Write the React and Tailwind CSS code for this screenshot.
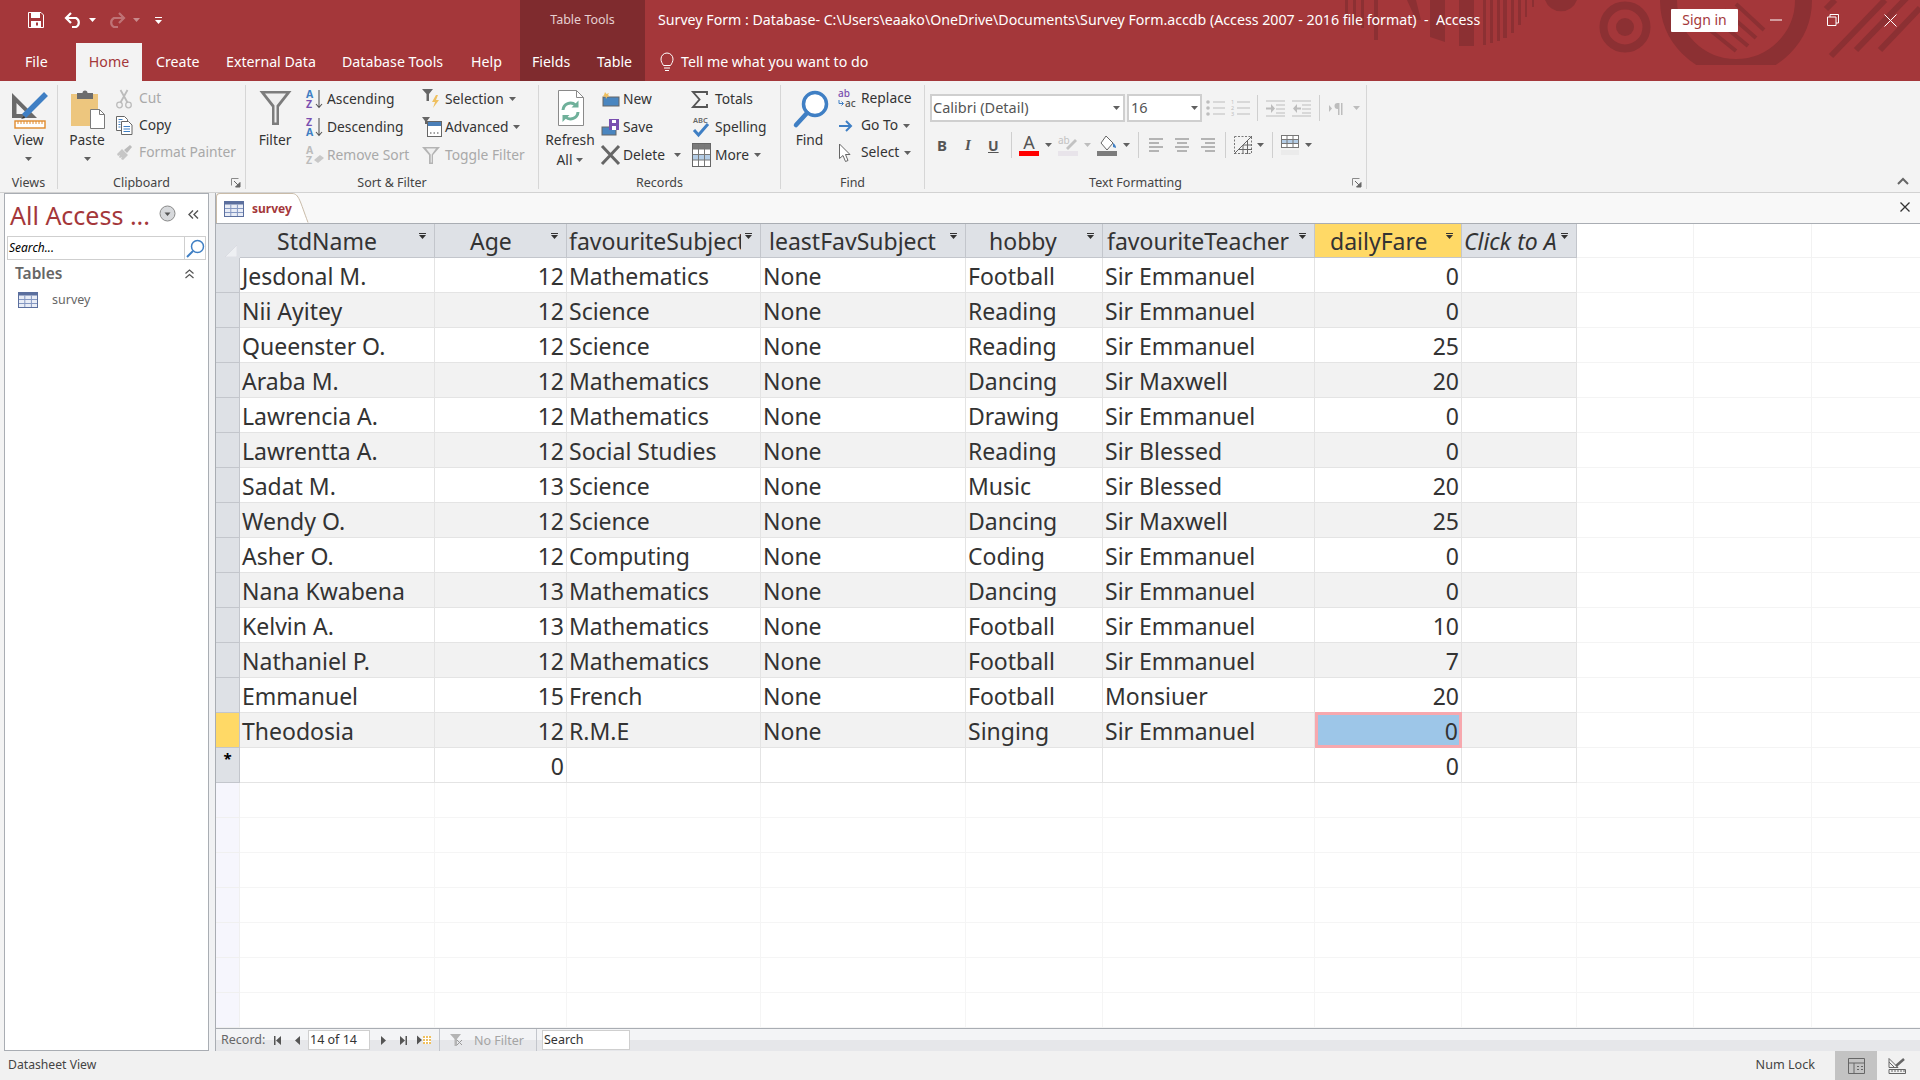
import React from 'react';

const SANS = "font-['Noto_Sans','Open_Sans',sans-serif]";

const columns = [
  { w: 'w-[195px]', name: 'StdName', head: 'pl-[37px]' },
  { w: 'w-[132px]', name: 'Age', head: 'pl-[35px]', right: true },
  { w: 'w-[194px]', name: 'favouriteSubject', head: 'pl-[2px]' },
  { w: 'w-[205px]', name: 'leastFavSubject', head: 'pl-[8px]' },
  { w: 'w-[137px]', name: 'hobby', head: 'pl-[23px]' },
  { w: 'w-[212px]', name: 'favouriteTeacher', head: 'pl-[4px]' },
  { w: 'w-[147px]', name: 'dailyFare', head: 'pl-[15px]', right: true },
  { w: 'w-[115px]', name: 'Click to Add', head: 'pl-[2px] italic' },
];

const rows = [
  ['Jesdonal M.', '12', 'Mathematics', 'None', 'Football', 'Sir Emmanuel', '0'],
  ['Nii Ayitey', '12', 'Science', 'None', 'Reading', 'Sir Emmanuel', '0'],
  ['Queenster O.', '12', 'Science', 'None', 'Reading', 'Sir Emmanuel', '25'],
  ['Araba M.', '12', 'Mathematics', 'None', 'Dancing', 'Sir Maxwell', '20'],
  ['Lawrencia A.', '12', 'Mathematics', 'None', 'Drawing', 'Sir Emmanuel', '0'],
  ['Lawrentta A.', '12', 'Social Studies', 'None', 'Reading', 'Sir Blessed', '0'],
  ['Sadat M.', '13', 'Science', 'None', 'Music', 'Sir Blessed', '20'],
  ['Wendy O.', '12', 'Science', 'None', 'Dancing', 'Sir Maxwell', '25'],
  ['Asher O.', '12', 'Computing', 'None', 'Coding', 'Sir Emmanuel', '0'],
  ['Nana Kwabena', '13', 'Mathematics', 'None', 'Dancing', 'Sir Emmanuel', '0'],
  ['Kelvin A.', '13', 'Mathematics', 'None', 'Football', 'Sir Emmanuel', '10'],
  ['Nathaniel P.', '12', 'Mathematics', 'None', 'Football', 'Sir Emmanuel', '7'],
  ['Emmanuel', '15', 'French', 'None', 'Football', 'Monsiuer', '20'],
  ['Theodosia', '12', 'R.M.E', 'None', 'Singing', 'Sir Emmanuel', '0'],
];

const Caret = ({ c = '#606060', className = '' }) => (
  <svg width="7" height="4" className={`shrink-0 ${className}`}><path d="M0 0h7L3.5 4z" fill={c} /></svg>
);

const Svg = ({ w, h, children, className = '' }) => (
  <svg width={w} height={h} viewBox={`0 0 ${w} ${h}`} fill="none" className={`shrink-0 overflow-visible ${className}`}>{children}</svg>
);

const TableGlyph = ({ w = 20, h = 16 }) => (
  <Svg w={w} h={h}>
    <rect x="0" y="0" width={w} height={h} fill="#5b6f9e" />
    <rect x="1" y="3.5" width={w - 2} height={h - 4.5} fill="#e9edf6" />
    <path d={`M1 7.5H${w - 1}M1 11.5H${w - 1}M${w * 0.34} 3.5V${h - 1}M${w * 0.67} 3.5V${h - 1}`} stroke="#8598c2" />
  </Svg>
);

const icons = {
  view: (
    <Svg w={38} h={40}>
      <path d="M2 3v25h25zM6.5 13v11h11z" fill="#6a6a6a" fillRule="evenodd" />
      <path d="M36 4L14 26" stroke="#3f7fc4" strokeWidth="5.5" />
      <path d="M14 26l-3 3 4-1z" fill="#2b2b2b" />
      <rect x="5" y="31" width="30" height="7" stroke="#e08a2c" strokeWidth="1.4" fill="#fff" />
      <path d="M8 31v3M11 31v3M14 31v3M17 31v3M20 31v3M23 31v3M26 31v3M29 31v3M32 31v3" stroke="#e08a2c" />
    </Svg>
  ),
  paste: (
    <Svg w={36} h={39}>
      <rect x="1" y="4" width="27" height="32" fill="#edc67e" />
      <path d="M7 3h5.500a2.500 2.500 0 0 1 5 0H23v6H7z" fill="#6d6d6d" />
      <path d="M20.500 19.500h9l5 5v14h-14z" fill="#fff" stroke="#7a7a7a" />
      <path d="M29.500 19.500v5h5" stroke="#7a7a7a" />
    </Svg>
  ),
  cut: (
    <Svg w={16} h={20}>
      <circle cx="3.500" cy="16" r="2.800" stroke="#bcbcbc" strokeWidth="1.300" />
      <circle cx="12.500" cy="16" r="2.800" stroke="#bcbcbc" strokeWidth="1.300" />
      <path d="M4.500 13.500L11.500 1M11.500 13.500L4.500 1" stroke="#bcbcbc" strokeWidth="1.800" />
    </Svg>
  ),
  copy: (
    <Svg w={17} h={19}>
      <path d="M.5.500h8l3 3v11H.5z" fill="#fff" stroke="#666" />
      <path d="M5.500 5.500h7l3.500 3.500v9.500H5.500z" fill="#fff" stroke="#666" />
      <path d="M2.500 3.500h4M2.500 6h2M2.500 8.500h2M2.500 11h2M7.500 10.500h6.500M7.500 13h6.500M7.500 15.500h6.500" stroke="#3f7fc4" />
    </Svg>
  ),
  painter: (
    <Svg w={17} h={17}>
      <path d="M1 10l5-5 6 6-5 5-2-1 1-2-2 1-1-1 1-2-2 1z" fill="#c6c6c6" />
      <path d="M8 6l6-5 2 2-5 6z" fill="#bcbcbc" />
    </Svg>
  ),
  filter: (
    <Svg w={33} h={36}>
      <path d="M.5 1h32L20 17v18h-7V17z" fill="#7c7c7c" />
      <path d="M6 3.500h21L17.500 15.500v17h-2v-17z" fill="#efefef" />
    </Svg>
  ),
  ascending: (
    <Svg w={18} h={20}>
      <text x="0" y="9" fontSize="10.500" fontWeight="700" fill="#3f7fc4" fontFamily="Noto Sans">A</text>
      <text x="0" y="19" fontSize="10.500" fontWeight="700" fill="#7a4fb0" fontFamily="Noto Sans">Z</text>
      <path d="M13 1v17M10 15l3 3.500 3-3.500" stroke="#555" strokeWidth="1.100" />
    </Svg>
  ),
  descending: (
    <Svg w={18} h={20}>
      <text x="0" y="9" fontSize="10.500" fontWeight="700" fill="#7a4fb0" fontFamily="Noto Sans">Z</text>
      <text x="0" y="19" fontSize="10.500" fontWeight="700" fill="#3f7fc4" fontFamily="Noto Sans">A</text>
      <path d="M13 1v17M10 15l3 3.500 3-3.500" stroke="#555" strokeWidth="1.100" />
    </Svg>
  ),
  removeSort: (
    <Svg w={18} h={20}>
      <text x="0" y="9" fontSize="10.500" fontWeight="700" fill="#bcbcbc" fontFamily="Noto Sans">A</text>
      <text x="0" y="19" fontSize="10.500" fontWeight="700" fill="#bcbcbc" fontFamily="Noto Sans">Z</text>
      <path d="M8 15l6-5 4 3-6 5z" fill="#c8c8c8" />
    </Svg>
  ),
  selection: (
    <Svg w={18} h={20}>
      <path d="M0 0h11L7 5v7H4.500V5z" fill="#666" />
      <path d="M14 6l-4 7h3l-2 6 6-8h-3l2-5z" fill="#efc060" />
    </Svg>
  ),
  advanced: (
    <Svg w={20} h={20}>
      <path d="M0 0h8L5 4v3H3V4z" fill="#666" />
      <rect x="5.500" y="4.500" width="14" height="15" fill="#fff" stroke="#666" />
      <rect x="6" y="5" width="13" height="4" fill="#4a7fb8" />
      <path d="M8 16h1.500M11.500 16H13M15 16h1.500" stroke="#444" />
    </Svg>
  ),
  toggle: (
    <Svg w={18} h={19}>
      <path d="M0 1h18l-7 8v9H7V9z" fill="#b4b4b4" />
      <path d="M4 2.500h10L9.700 8.500v8h-1v-8z" fill="#efefef" />
    </Svg>
  ),
  refresh: (
    <Svg w={30} h={38}>
      <path d="M3.500 1.500h18l7 7v28h-25z" fill="#fff" stroke="#8a8a8a" />
      <path d="M21.500 1.500v7h7" stroke="#8a8a8a" />
      <path d="M8 21a7.500 7.500 0 0 1 12.500-5" stroke="#6fb09a" strokeWidth="3" />
      <path d="M23.500 11.500v7h-7z" fill="#6fb09a" />
      <path d="M23 23a7.500 7.500 0 0 1-12.500 5" stroke="#6fb09a" strokeWidth="3" />
      <path d="M7.500 33v-7h7z" fill="#6fb09a" />
    </Svg>
  ),
  newRec: (
    <Svg w={19} h={16}>
      <rect x="2" y="6" width="16" height="9" fill="#4a86c0" stroke="#666" />
      <path d="M4 1l1.500 2L8 2 7 4l2 1.500H6.500L5 8 4.500 5.500H1.500L3 4z" fill="#efc060" />
    </Svg>
  ),
  save: (
    <Svg w={19} h={19}>
      <rect x="1" y="9" width="14" height="8" fill="#4a86c0" stroke="#666" />
      <rect x="8" y="1" width="10" height="11" fill="#7a4fb0" />
      <rect x="11" y="2" width="4" height="3" fill="#fff" />
      <rect x="11" y="8" width="4" height="4" fill="#fff" />
    </Svg>
  ),
  deleteRec: (
    <Svg w={19} h={20}>
      <path d="M1 1l17 18M18 1L1 19" stroke="#666" strokeWidth="3" />
    </Svg>
  ),
  totals: (
    <Svg w={16} h={17}>
      <path d="M15 4V1H1l6.500 7.500L1 16h14v-3" stroke="#555" strokeWidth="1.900" />
    </Svg>
  ),
  spelling: (
    <Svg w={18} h={22}>
      <text x="1" y="6.500" fontSize="7.500" fontWeight="600" fill="#666" fontFamily="Noto Sans">ABC</text>
      <path d="M2 14l4.500 5L16 8" stroke="#3f7fc4" strokeWidth="3" />
    </Svg>
  ),
  more: (
    <Svg w={19} h={24}>
      <rect x=".5" y=".5" width="18" height="23" fill="#fff" stroke="#666" />
      <rect x="1" y="1" width="17" height="5" fill="#7a7a7a" />
      <rect x="1" y="11" width="17" height="6" fill="#b4cde6" />
      <path d="M1 6h17M1 11.500h17M1 17h17M6.500 1v22M12.500 1v22" stroke="#777" />
    </Svg>
  ),
  find: (
    <Svg w={36} h={38}>
      <circle cx="22" cy="14" r="11.500" stroke="#3f7fc4" strokeWidth="3.500" fill="#fff" />
      <path d="M14 23L3 35" stroke="#3f7fc4" strokeWidth="4.500" strokeLinecap="round" />
    </Svg>
  ),
  replace: (
    <Svg w={20} h={20}>
      <text x="0" y="8" fontSize="10" fontWeight="500" fill="#7a4fb0" fontFamily="Noto Sans">ab</text>
      <text x="7" y="18" fontSize="10" fontWeight="500" fill="#555" fontFamily="Noto Sans">ac</text>
      <path d="M1 11v3.500h4M3.500 12.500l2 2-2 2" stroke="#3f7fc4" />
    </Svg>
  ),
  goTo: (
    <Svg w={16} h={14}>
      <path d="M1 7h12M8 2l5 5-5 5" stroke="#3f7fc4" strokeWidth="2" />
    </Svg>
  ),
  select: (
    <Svg w={13} h={20}>
      <path d="M1.500 1v14.500l3.500-3 2.500 6 2.500-1-2.500-6h4.500z" fill="#fff" stroke="#666" />
    </Svg>
  ),
};

const Item = ({ icon, label, disabled, caret, slot = 'w-[22px]', height = 'h-[28px]', caretClass = 'ml-[5px]' }) => (
  <div className={`flex items-center ${height} ${disabled ? 'text-[#a9a9a9]' : 'text-[#333]'}`}>
    <span className={`flex items-center ${slot}`}>{icon}</span>
    <span className="whitespace-nowrap">{label}</span>
    {caret && <Caret className={caretClass} />}
  </div>
);

const Big = ({ icon, label, w, iconClass = '', caret = true }) => (
  <div className={`flex flex-col items-center ${w}`}>
    <div className={`h-[45px] flex justify-center items-start pt-[5px] ${iconClass}`}>{icon}</div>
    <div className="h-[20px] leading-[20px] text-[#333]">{label}</div>
    {caret && <div className="h-[18px] flex items-center"><Caret /></div>}
  </div>
);

const Launcher = () => (
  <svg width="11" height="11" className="absolute right-[4px] top-[2px]" fill="none">
    <path d="M8.500 1.500h-7v7" stroke="#8a8a8a" />
    <path d="M4 4l5 5M10 5.500V10H5.500z" stroke="#666" fill="#666" />
  </svg>
);

const Group = ({ w, label, launcher, children, className = '' }) => (
  <div className={`flex flex-col h-full border-r border-[#d6d6d6] ${w}`}>
    <div className={`h-[90px] flex ${className}`}>{children}</div>
    <div className={`relative h-[14px] pt-[1px] leading-[14px] text-center text-[12.5px] text-[#444] ${launcher ? 'pr-[20px]' : ''}`}>
      {label}
      {launcher && <Launcher />}
    </div>
  </div>
);

const Sep = ({ h = 'h-[26px]', className = '' }) => <div className={`w-px bg-[#cfcfcf] ${h} ${className}`} />;

const lines = (arr, c) => <path d={arr} stroke={c} strokeWidth="1.200" />;

const TextFormatting = () => (
  <div className="flex flex-col pl-[5px]">
    <div className="flex items-center h-[28px] mt-[9px]">
      <div className="flex items-center justify-between w-[195px] h-[28px] bg-white border-2 border-[#cfcfcf] pl-[1px] pr-[3px] text-[14.500px] text-[#555]">
        Calibri (Detail)<Caret />
      </div>
      <div className="flex items-center justify-between w-[75px] h-[28px] ml-[2px] bg-white border-2 border-[#cfcfcf] pl-[2px] pr-[2px] text-[14.500px] text-[#555]">
        16<Caret />
      </div>
      <Svg w={19} h={18} className="ml-[4px]">
        <circle cx="2" cy="3" r="1.800" fill="#bdbdbd" /><circle cx="2" cy="9" r="1.800" fill="#bdbdbd" /><circle cx="2" cy="15" r="1.800" fill="#bdbdbd" />
        {lines('M7 3h12M7 9h12M7 15h12', '#bdbdbd')}
      </Svg>
      <Svg w={19} h={18} className="ml-[6px]">
        <text x="0" y="5" fontSize="5.500" fill="#bdbdbd" fontFamily="Noto Sans">1</text>
        <text x="0" y="11" fontSize="5.500" fill="#bdbdbd" fontFamily="Noto Sans">2</text>
        <text x="0" y="17" fontSize="5.500" fill="#bdbdbd" fontFamily="Noto Sans">3</text>
        {lines('M6 3h13M6 9h13M6 15h13', '#bdbdbd')}
      </Svg>
      <Sep className="ml-[7px]" />
      <Svg w={19} h={17} className="ml-[8px]">
        {lines('M0 1h19M10 5h9M10 9h9M10 13h9M0 16h19', '#bdbdbd')}
        <path d="M0 7.500h5V4l4 4.500-4 4.500V9.500H0z" fill="#bdbdbd" />
      </Svg>
      <Svg w={19} h={17} className="ml-[7px]">
        {lines('M0 1h19M10 5h9M10 9h9M10 13h9M0 16h19', '#bdbdbd')}
        <path d="M9 7.500H5V4L1 8.500 5 13V9.500h4z" fill="#bdbdbd" />
      </Svg>
      <Sep className="ml-[8px]" />
      <Svg w={14} h={13} className="ml-[9px]">
        <path d="M0 3l3 3.500L0 10z" fill="#bdbdbd" />
        <path d="M8.500 1a3 3 0 0 0 0 6h.500v6h1.500V1H12v12h1.500V1" fill="#bdbdbd" />
      </Svg>
      <Caret c="#bdbdbd" className="ml-[10px]" />
    </div>
    <div className="flex items-center h-[28px] mt-[9px]">
      <span className="w-[33px] pl-[7px] text-[15px] font-bold text-[#555]">B</span>
      <span className="w-[25px] pl-[2px] text-[15px] font-bold italic text-[#555] font-['Liberation_Serif',serif]">I</span>
      <span className="w-[22px] text-[14px] font-bold text-[#555] underline">U</span>
      <Sep className="ml-[1px]" />
      <Svg w={20} h={21} className="ml-[7px]">
        <text x="10" y="14" textAnchor="middle" fontSize="18" fill="#555" fontFamily="Noto Sans">A</text>
        <rect y="16" width="20" height="5" fill="#f00" />
      </Svg>
      <Caret className="ml-[6px]" />
      <Svg w={20} h={21} className="ml-[6px]">
        <text x="0" y="9" fontSize="10" fill="#c2c2c2" fontFamily="Noto Sans">ab</text>
        <path d="M8 13l9-9 2 2-9 9z" fill="#c2c2c2" />
        <rect y="16" width="20" height="5" fill="#e8e4ea" />
      </Svg>
      <Caret c="#bdbdbd" className="ml-[6px]" />
      <Svg w={20} h={21} className="ml-[6px]">
        <path d="M9 1l7 7-6 7-6-7z" fill="#fff" stroke="#666" />
        <path d="M16 8c2 1 3 3 3 5-1 0-2-1-3-1z" fill="#3f7fc4" />
        <rect y="16" width="20" height="5" fill="#7c7c7c" />
      </Svg>
      <Caret className="ml-[6px]" />
      <Sep className="ml-[8px]" />
      <Svg w={14} h={16} className="ml-[10px]">{lines('M0 2h14M0 6h10M0 10h14M0 14h10', '#777')}</Svg>
      <Svg w={14} h={16} className="ml-[12px]">{lines('M0 2h14M2 6h10M0 10h14M2 14h10', '#777')}</Svg>
      <Svg w={14} h={16} className="ml-[12px]">{lines('M0 2h14M4 6h10M0 10h14M4 14h10', '#777')}</Svg>
      <Sep className="ml-[10px]" />
      <Svg w={18} h={18} className="ml-[8px]">
        <path d="M.5.500h17v17H.5z" stroke="#777" strokeDasharray="2 1.500" />
        <path d="M0 18L18 0M9 9v9M13.500 5v13M9 9h9M5 13.500h13" stroke="#666" />
      </Svg>
      <Caret className="ml-[5px]" />
      <Sep className="ml-[8px]" />
      <Svg w={18} h={20} className="ml-[8px]">
        <rect x=".5" y=".5" width="17" height="12" fill="#fff" stroke="#777" />
        <rect x="1" y="5" width="16" height="3" fill="#b4cde6" />
        <path d="M6 1v12M12 1v12M1 4.500h16M1 8.500h16" stroke="#777" />
        <rect y="15" width="18" height="5" fill="#ebebeb" />
      </Svg>
      <Caret className="ml-[6px]" />
    </div>
  </div>
);

const Ribbon = () => (
  <div className="flex h-[112px] pt-[4px] bg-[#f3f3f3] border-b border-[#d2d2d2] text-[13.800px]">
    <div className="flex h-[104px]">
      <Group w="w-[58px]" label="Views">
        <Big icon={icons.view} label="View" w="w-[57px]" />
      </Group>
      <Group w="w-[188px]" label="Clipboard" launcher>
        <Big icon={icons.paste} label="Paste" w="w-[58px]" iconClass="pl-[2px]" />
        <div className="flex flex-col">
          <Item icon={icons.cut} label="Cut" disabled height="h-[27px]" slot="w-[23px]" />
          <Item icon={icons.copy} label="Copy" height="h-[27px]" slot="w-[23px]" />
          <Item icon={icons.painter} label="Format Painter" disabled height="h-[27px]" slot="w-[23px]" />
        </div>
      </Group>
      <Group w="w-[293px]" label="Sort & Filter" className="pl-[6px]">
        <Big icon={icons.filter} label="Filter" w="w-[46px]" caret={false} />
        <div className="flex flex-col w-[116px] ml-[8px]">
          <Item icon={icons.ascending} label="Ascending" slot="w-[21px]" />
          <Item icon={icons.descending} label="Descending" slot="w-[21px]" />
          <Item icon={icons.removeSort} label="Remove Sort" slot="w-[21px]" disabled />
        </div>
        <div className="flex flex-col">
          <Item icon={icons.selection} label="Selection" caret slot="w-[23px]" />
          <Item icon={icons.advanced} label="Advanced" caret slot="w-[23px]" />
          <Item icon={icons.toggle} label="Toggle Filter" disabled slot="w-[23px]" />
        </div>
      </Group>
      <Group w="w-[242px]" label="Records">
        <div className="flex flex-col items-center w-[62px]">
          <div className="h-[45px] pt-[4px]">{icons.refresh}</div>
          <div className="h-[20px] leading-[20px] text-[#333]">Refresh</div>
          <div className="h-[20px] leading-[20px] text-[#333] flex items-center">All<Caret className="ml-[4px]" /></div>
        </div>
        <div className="flex flex-col w-[91px]">
          <Item icon={icons.newRec} label="New" />
          <Item icon={icons.save} label="Save" />
          <Item icon={icons.deleteRec} label="Delete" caret caretClass="ml-[9px]" />
        </div>
        <div className="flex flex-col">
          <Item icon={icons.totals} label="Totals" slot="w-[23px]" />
          <Item icon={icons.spelling} label="Spelling" slot="w-[23px]" />
          <Item icon={icons.more} label="More" caret slot="w-[23px]" />
        </div>
      </Group>
      <Group w="w-[144px]" label="Find">
        <Big icon={icons.find} label="Find" w="w-[57px]" iconClass="pl-[2px]" caret={false} />
        <div className="flex flex-col">
          <Item icon={icons.replace} label="Replace" height="h-[27px]" slot="w-[23px]" />
          <Item icon={icons.goTo} label="Go To" caret height="h-[27px]" slot="w-[23px]" />
          <Item icon={icons.select} label="Select" caret height="h-[27px]" slot="w-[23px]" />
        </div>
      </Group>
      <Group w="w-[442px]" label="Text Formatting" launcher>
        <TextFormatting />
      </Group>
    </div>
    <div className="flex-1 flex justify-end items-end pb-[7px] pr-[11px]">
      <svg width="12" height="8" fill="none"><path d="M1 7l5-5 5 5" stroke="#666" strokeWidth="2" /></svg>
    </div>
  </div>
);

const Watermark = () => (
  <svg width="580" height="81" viewBox="1340 0 580 81" className="absolute right-0 top-0" fill="none">
    <defs>
      <clipPath id="bigring"><path d="M1660 0h152v65h-152z" /></clipPath>
    </defs>
    <g fill="#8c3033">
      <path d="M1345 0h3v18h-3zM1353 0h3v25h-3zM1361 0h3v28h-3zM1374 0h4v40h-4zM1407 0h9l5 20h-5zM1430 0h15v42l-15-5zM1459 0h15v46h-15z" />
      <path d="M1483 0h3v45h-3zM1490 0h3v43h-3zM1497 0h3v41h-3zM1503 0h4v38h-4zM1511 0h3v33h-3zM1518 0h3v25h-3zM1525 0h2v17h-2zM1532 0h2v7h-2z" />
      <path d="M1545 0h32a17 17 0 0 1-32 0z" />
      <circle cx="1625" cy="27" r="9" />
    </g>
    <circle cx="1625" cy="27" r="21.500" stroke="#8c3033" strokeWidth="8" />
    <g clipPath="url(#bigring)">
      <circle cx="1736" cy="0" r="67.500" stroke="#8c3033" strokeWidth="17" />
      <path d="M1700 22l36 29M1712 16l36 30M1724 10l32 28M1736 4l28 26" stroke="#8c3033" strokeWidth="4" />
    </g>
    <path d="M1826 9l9-9M1831 56L1885 0M1856 50L1920 -16M1880 50L1920 8" stroke="#8c3033" strokeWidth="6" />
  </svg>
);

const Header = () => (
  <div className="relative flex h-[81px] bg-[#a4373a] text-white text-[14.200px]">
    <Watermark />
    <div className="relative flex flex-col w-[520px]">
      <div className="flex items-center h-[40px] pl-[28px]">
        <Svg w={16} h={16}>
          <path d="M.5.500h12.500l2.500 2.500v12.500H.5z" stroke="#fff" />
          <rect x="3" y="1" width="9" height="5" fill="#fff" />
          <rect x="3" y="9" width="10" height="6" fill="#fff" />
          <rect x="8" y="10.500" width="2" height="3" fill="#a4373a" />
        </Svg>
        <Svg w={18} h={16} className="ml-[20px]">
          <path d="M2 6h10a5 5 0 0 1 0 9H8" stroke="#fff" strokeWidth="2.200" />
          <path d="M7 1L2 6l5 5" stroke="#fff" strokeWidth="2.200" />
        </Svg>
        <Caret c="#fff" className="ml-[7px]" />
        <Svg w={18} h={16} className="ml-[12px] opacity-30">
          <path d="M16 6H6a5 5 0 0 0 0 9h4" stroke="#fff" strokeWidth="2.200" />
          <path d="M11 1l5 5-5 5" stroke="#fff" strokeWidth="2.200" />
        </Svg>
        <Caret c="#c98a8c" className="ml-[7px]" />
        <svg width="7" height="7" className="ml-[15px]"><path d="M0 0h7v1H0zM0 3h7L3.500 7z" fill="#fff" /></svg>
      </div>
      <div className="flex items-end h-[41px]">
        <div className="flex items-center w-[76px] h-[38px] pl-[25px]">File</div>
        <div className="flex items-center justify-center w-[66px] h-[38px] bg-[#f3f3f3] text-[#a4373a]">Home</div>
        <div className="flex items-center h-[38px] pl-[14px] w-[84px]">Create</div>
        <div className="flex items-center h-[38px] w-[116px]">External Data</div>
        <div className="flex items-center h-[38px] w-[129px]">Database Tools</div>
        <div className="flex items-center h-[38px]">Help</div>
      </div>
    </div>
    <div className="relative flex flex-col w-[125px] bg-[#7f2b2e]">
      <div className="flex items-center justify-center h-[40px] text-[12.500px] text-[#e6cfd0]">Table Tools</div>
      <div className="flex items-end h-[41px]">
        <div className="flex items-center h-[38px] pl-[12px] w-[77px]">Fields</div>
        <div className="flex items-center h-[38px]">Table</div>
      </div>
    </div>
    <div className="relative flex flex-col flex-1">
      <div className="flex items-center h-[40px] pl-[13px]">
        <span className="whitespace-pre">{'Survey Form : Database- C:\\Users\\eaako\\OneDrive\\Documents\\Survey Form.accdb (Access 2007 - 2016 file format)  -  Access'}</span>
        <div className="ml-auto flex items-center justify-center w-[67px] h-[23px] pb-[1px] bg-white text-[#a4373a] text-[14px] rounded-[1px]">Sign in</div>
        <svg width="12" height="12" fill="none" className="ml-[32px]"><path d="M0 6h12" stroke="#fff" /></svg>
        <svg width="12" height="12" fill="none" className="ml-[45px]">
          <path d="M.5 3h8.500v8.500H.5zM3 3V.5h8.500V9H9" stroke="#fff" />
        </svg>
        <svg width="13" height="13" fill="none" className="ml-[45px] mr-[23px]"><path d="M.5.500l12 12M12.500.500l-12 12" stroke="#fff" /></svg>
      </div>
      <div className="flex items-end h-[41px] pl-[15px]">
        <div className="flex items-center h-[38px]">
          <svg width="14" height="21" fill="none" className="mr-[7px]">
            <path d="M3.500 13.500C2 11 1 9.500 1 7a6 6 0 0 1 12 0c0 2.500-1 4-2.500 6.500zM4 16h6M5 18.500h4" stroke="#fff" />
          </svg>
          Tell me what you want to do
        </div>
      </div>
    </div>
  </div>
);

const NavPane = () => (
  <div className="w-[205px] ml-[4px] bg-white border border-[#a9adb3] flex flex-col">
    <div className="flex items-center h-[42px] pl-[5px] pr-[8px]">
      <span className="text-[25px] leading-none text-[#a4373a] whitespace-nowrap">All Access ...</span>
      <svg width="17" height="17" fill="none" className="ml-auto mb-[4px]">
        <circle cx="8.500" cy="8.500" r="7.500" fill="#d7d9dc" stroke="#8a8a8a" />
        <path d="M5 6.500h7M5.500 7.500h6L8.500 11z" fill="#555" />
      </svg>
      <svg width="11" height="9" fill="none" className="ml-[12px] mr-[1px] mb-[2px]">
        <path d="M5 .5L1 4.500l4 4M10 .5L6 4.500l4 4" stroke="#555" strokeWidth="1.400" />
      </svg>
    </div>
    <div className="flex items-center h-[24px] mx-[2px] border border-[#cfcfcf]">
      <span className="flex-1 pl-[1px] text-[12px] italic text-black">Search...</span>
      <div className="w-[21px] h-full border-l border-[#cfcfcf] flex items-center justify-center">
        <svg width="19" height="19" fill="none">
          <circle cx="11.500" cy="7.500" r="6" stroke="#3f7fc4" strokeWidth="1.500" />
          <path d="M7 12l-6 6" stroke="#3f7fc4" strokeWidth="2" />
        </svg>
      </div>
    </div>
    <div className="flex items-center h-[28px] pl-[10px] pr-[14px] text-[15.500px] font-semibold text-[#666]">
      Tables
      <svg width="9" height="10" fill="none" className="ml-auto">
        <path d="M.5 4.500l4-3.500 4 3.500M.5 9l4-3.500L8.500 9" stroke="#555" strokeWidth="1.200" />
      </svg>
    </div>
    <div className="flex items-center h-[24px] pl-[13px] text-[12.500px] text-[#666]">
      <TableGlyph />
      <span className="ml-[14px]">survey</span>
    </div>
  </div>
);

const Filt = () => (
  <svg width="7" height="6" className="shrink-0 mb-[10px]"><path d="M0 0h7v1H0zM0 2h7L3.500 6z" fill="#333" /></svg>
);

const Blank = ({ c = 'border-[#f4f4f4]' }) => (
  <>
    <div className={`w-[117px] border-r border-b ${c}`} />
    <div className={`w-[118px] border-r border-b ${c}`} />
    <div className={`flex-1 border-b ${c}`} />
  </>
);

const Datasheet = () => (
  <div className="flex-1 flex flex-col bg-white overflow-hidden text-[23px] text-[#333]">
    <div className="flex h-[35px] shrink-0 border-t border-[#a9adb3]">
      <div className="w-[24px] bg-[#dee1e6] flex items-end justify-end">
        <svg width="12" height="12" className="mb-[1px] mr-[3px]"><path d="M12 0v12H0z" fill="#eef0f3" stroke="#d0d3d8" strokeWidth="0.500" /></svg>
      </div>
      {columns.map((c) => (
        <div key={c.name} className={`flex items-center pr-[8px] pt-[1px] border-r border-b border-[#c3c6cc] ${c.w} ${c.name === 'dailyFare' ? 'bg-[#ffd966]' : 'bg-[#dee1e6]'}`}>
          <span className={`flex-1 mr-[4px] overflow-hidden whitespace-nowrap ${c.head}`}>{c.name}</span>
          <Filt />
        </div>
      ))}
      <Blank c="border-[#f2f2f2]" />
    </div>
    {rows.map((r, ri) => (
      <div key={r[0]} className="flex h-[35px] shrink-0">
        <div className={`w-[24px] border-b border-r border-[#c3c6cc] ${ri === 13 ? 'bg-[#ffd966]' : 'bg-[#dee1e6]'}`} />
        {columns.slice(0, 7).map((c, i) => {
          const sel = ri === 13 && i === 6;
          const bg = ri % 2 === 1 ? 'bg-[#f2f2f2]' : 'bg-white';
          if (sel) {
            return (
              <div key={c.name} className={`${c.w} h-[36px] -mt-px pt-[2px] flex items-center justify-end pr-[1px] bg-[#9dc6e8] border-[3px] border-[#f7a8ae]`}>
                {r[i]}
              </div>
            );
          }
          return (
            <div key={c.name} className={`${c.w} ${bg} pt-[2px] flex items-center border-r border-b border-[#e4e4e4] ${c.right ? 'justify-end pr-[2px]' : 'pl-[2px]'} whitespace-nowrap overflow-hidden`}>
              {r[i]}
            </div>
          );
        })}
        <div className={`w-[115px] border-r border-b border-[#e4e4e4] ${ri % 2 === 1 ? 'bg-[#f2f2f2]' : 'bg-white'}`} />
        <Blank />
      </div>
    ))}
    <div className="flex h-[35px] shrink-0">
      <div className="w-[24px] bg-[#dee1e6] border-b border-r border-[#c3c6cc] flex justify-center pt-[3px] text-[15px] leading-[15px] font-bold text-black">*</div>
      {columns.map((c) => (
        <div key={c.name} className={`${c.w} pt-[2px] flex items-center justify-end pr-[2px] border-r border-b border-[#e4e4e4]`}>
          {c.right ? '0' : ''}
        </div>
      ))}
      <Blank />
    </div>
    {[0, 1, 2, 3, 4, 5, 6].map((n) => (
      <div key={n} className="flex h-[35px] shrink-0">
        <div className="w-[24px] bg-[#f6f6fd] border-b border-r border-[#f0f0f0]" />
        {columns.map((c) => (
          <div key={c.name} className={`${c.w} border-r border-b border-[#f5f5f5]`} />
        ))}
        <Blank c="border-[#f5f5f5]" />
      </div>
    ))}
  </div>
);

const RecordBar = () => (
  <div className="flex items-center h-[23px] shrink-0 border-t border-[#a9adb3] bg-[linear-gradient(#f3f4f6_50%,#e6e7ea_50%)] text-[12.500px] text-[#666]">
    <span className="ml-[5px] w-[53px] pt-[1px]">Record:</span>
    <svg width="7" height="9"><path d="M0 0h1.500v9H0zM7 0v9L2 4.500z" fill="#555" /></svg>
    <svg width="5" height="9" className="ml-[14px]"><path d="M5 0v9L0 4.500z" fill="#555" /></svg>
    <div className="flex items-center ml-[8px] w-[62px] h-[20px] bg-white border border-[#cfcfcf] pl-[1px] text-[#333]">14 of 14</div>
    <svg width="5" height="9" className="ml-[11px]"><path d="M0 0v9l5-4.500z" fill="#555" /></svg>
    <svg width="7" height="9" className="ml-[14px]"><path d="M0 0v9l5-4.500zM5.500 0H7v9H5.500z" fill="#555" /></svg>
    <svg width="15" height="10" className="ml-[10px]">
      <path d="M0 .5v9l5-4.500z" fill="#555" />
      <path d="M6 1h8v8H6z" fill="#efc060" />
      <path d="M8.500 1v8M11.500 1v8M6 3.500h8M6 6.500h8" stroke="#fff" />
    </svg>
    <div className="w-px h-full bg-[#c3c6cc] ml-[7px]" />
    <svg width="12" height="14" className="ml-[10px]">
      <path d="M0 1h11L7 6v7H4.500V6z" fill="#b4b4b4" />
      <path d="M7 7l5 5M12 7l-5 5" stroke="#999" />
    </svg>
    <span className="ml-[12px] w-[62px] text-[#a4a4a4] pt-[2px]">No Filter</span>
    <div className="w-px h-full bg-[#c3c6cc]" />
    <div className="flex items-center ml-[5px] w-[88px] h-[20px] bg-white border border-[#cfcfcf] pl-[1px] text-[#333]">Search</div>
  </div>
);

const StatusBar = () => (
  <div className="flex items-center h-[29px] shrink-0 bg-[#f1f1f1] text-[#444]">
    <span className="ml-[8px] text-[12.200px]">Datasheet View</span>
    <span className="ml-auto text-[12.600px]">Num Lock</span>
    <div className="flex items-center justify-center w-[42px] h-full ml-[20px] bg-[#c3c3c3]">
      <svg width="17" height="16" fill="none">
        <path d="M.5.500h16v15H.5zM.5 5h16M6 5v10.500M9 8.500h2M13 8.500h2M9 11.500h2M13 11.500h2" stroke="#666" />
      </svg>
    </div>
    <svg width="18" height="16" fill="none" className="ml-[11px] mr-[14px]">
      <path d="M1 .5v9h9zM1 4l5 5" stroke="#666" />
      <path d="M8 8l8-7" stroke="#666" strokeWidth="2.500" />
      <path d="M1 11.500h16.500v4H1zM4 12v2M7 12v2M10 12v2M13 12v2M16 12v2" stroke="#666" />
    </svg>
  </div>
);

const App = () => (
  <div className={`w-[1920px] h-[1080px] flex flex-col overflow-hidden ${SANS}`}>
    <Header />
    <Ribbon />
    <div className="flex flex-1 min-h-0 bg-[#f3f3f3]">
      <NavPane />
      <div className="w-[6px] bg-[#f0f1f3]" />
      <div className="flex-1 flex flex-col min-w-0 border-l border-[#a9adb3]">
        <div className="flex items-end justify-between h-[30px] shrink-0 bg-[#f8f8f8]">
          <div className="flex items-stretch h-[30px]">
            <div className="flex items-center shrink-0 w-[72px] pl-[7px] bg-white border-l border-t border-[#c9bba8] rounded-tl-[4px]">
              <TableGlyph />
              <span className="relative ml-[8px] text-[12px] font-bold text-[#a4373a] whitespace-nowrap">survey</span>
            </div>
            <svg width="21" height="30" fill="none" className="shrink-0">
              <path d="M0 .5h4c7 0 8 8 16 29H0z" fill="#fff" />
              <path d="M0 .5h4c7 0 8 8 16 29" stroke="#c9bba8" />
            </svg>
          </div>
          <svg width="10" height="10" fill="none" className="mr-[10px] mb-[11px]"><path d="M.5.500l9 9M9.500.500l-9 9" stroke="#333" strokeWidth="1.300" /></svg>
        </div>
        <Datasheet />
        <RecordBar />
      </div>
    </div>
    <StatusBar />
  </div>
);

export default App;
